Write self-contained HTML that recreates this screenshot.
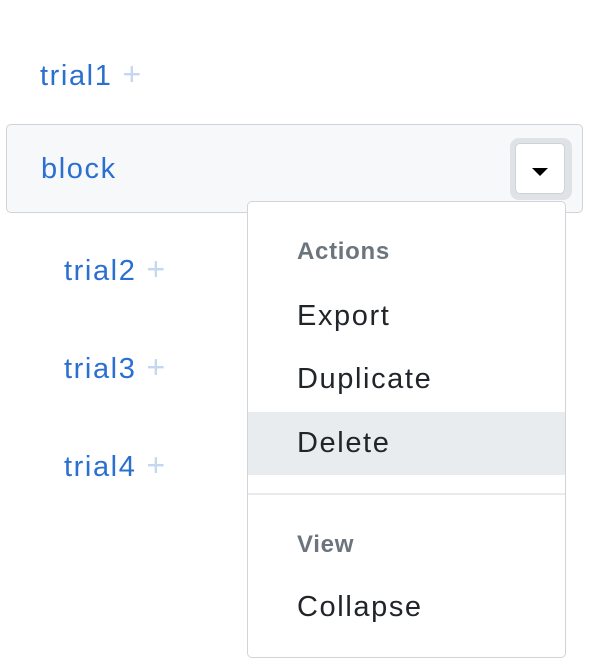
<!DOCTYPE html>
<html><head><style>
body{margin:0;width:614px;height:670px;background:#fff;font-family:"Liberation Sans",sans-serif;position:relative;overflow:hidden}
.t{position:absolute;font-size:29px;color:#2a70d0;line-height:1;white-space:nowrap;letter-spacing:1.6px}
.p{color:#c3d7f0;font-size:32px;margin-left:10px;letter-spacing:0}
#box{position:absolute;left:6px;top:124px;width:575px;height:87px;background:#f7f8fa;border:1px solid #d0d4d9;border-radius:5px}
#ring{position:absolute;left:510px;top:138px;width:62px;height:62px;background:#dfe2e6;border-radius:9px}
#btn{position:absolute;left:515px;top:143px;width:50px;height:51px;background:#fff;border:1px solid #cfd3d8;border-radius:5px;box-sizing:border-box}
#caret{position:absolute;left:532px;top:168px;width:0;height:0;border-left:8px solid transparent;border-right:8px solid transparent;border-top:8px solid #000}
#menu{position:absolute;left:247px;top:201px;width:317px;height:455px;background:#fff;border:1px solid #d0d4d9;border-radius:5px}
.m{position:absolute;left:49px;font-size:29px;color:#212529;line-height:1;letter-spacing:1.6px}
.h{position:absolute;left:49px;font-size:24px;font-weight:bold;color:#6c757d;line-height:1;letter-spacing:0.7px}
</style></head><body>
<div class="t" style="left:40px;top:58px">trial1<span class="p">+</span></div>
<div id="box"></div>
<div class="t" style="left:41px;top:155px">block</div>
<div id="ring"></div><div id="btn"></div><div id="caret"></div>
<div class="t" style="left:64px;top:253px">trial2<span class="p">+</span></div>
<div class="t" style="left:64px;top:351px">trial3<span class="p">+</span></div>
<div class="t" style="left:64px;top:449px">trial4<span class="p">+</span></div>
<div id="menu">
<div class="h" style="top:38px">Actions</div>
<div class="m" style="top:100px">Export</div>
<div class="m" style="top:163px">Duplicate</div>
<div style="position:absolute;left:0;top:210px;width:317px;height:63px;background:#e9ecef"></div>
<div class="m" style="top:227px">Delete</div>
<div style="position:absolute;left:0;top:291px;width:317px;height:2px;background:#e9ecef"></div>
<div class="h" style="top:331px">View</div>
<div class="m" style="top:391px">Collapse</div>
</div>
</body></html>
